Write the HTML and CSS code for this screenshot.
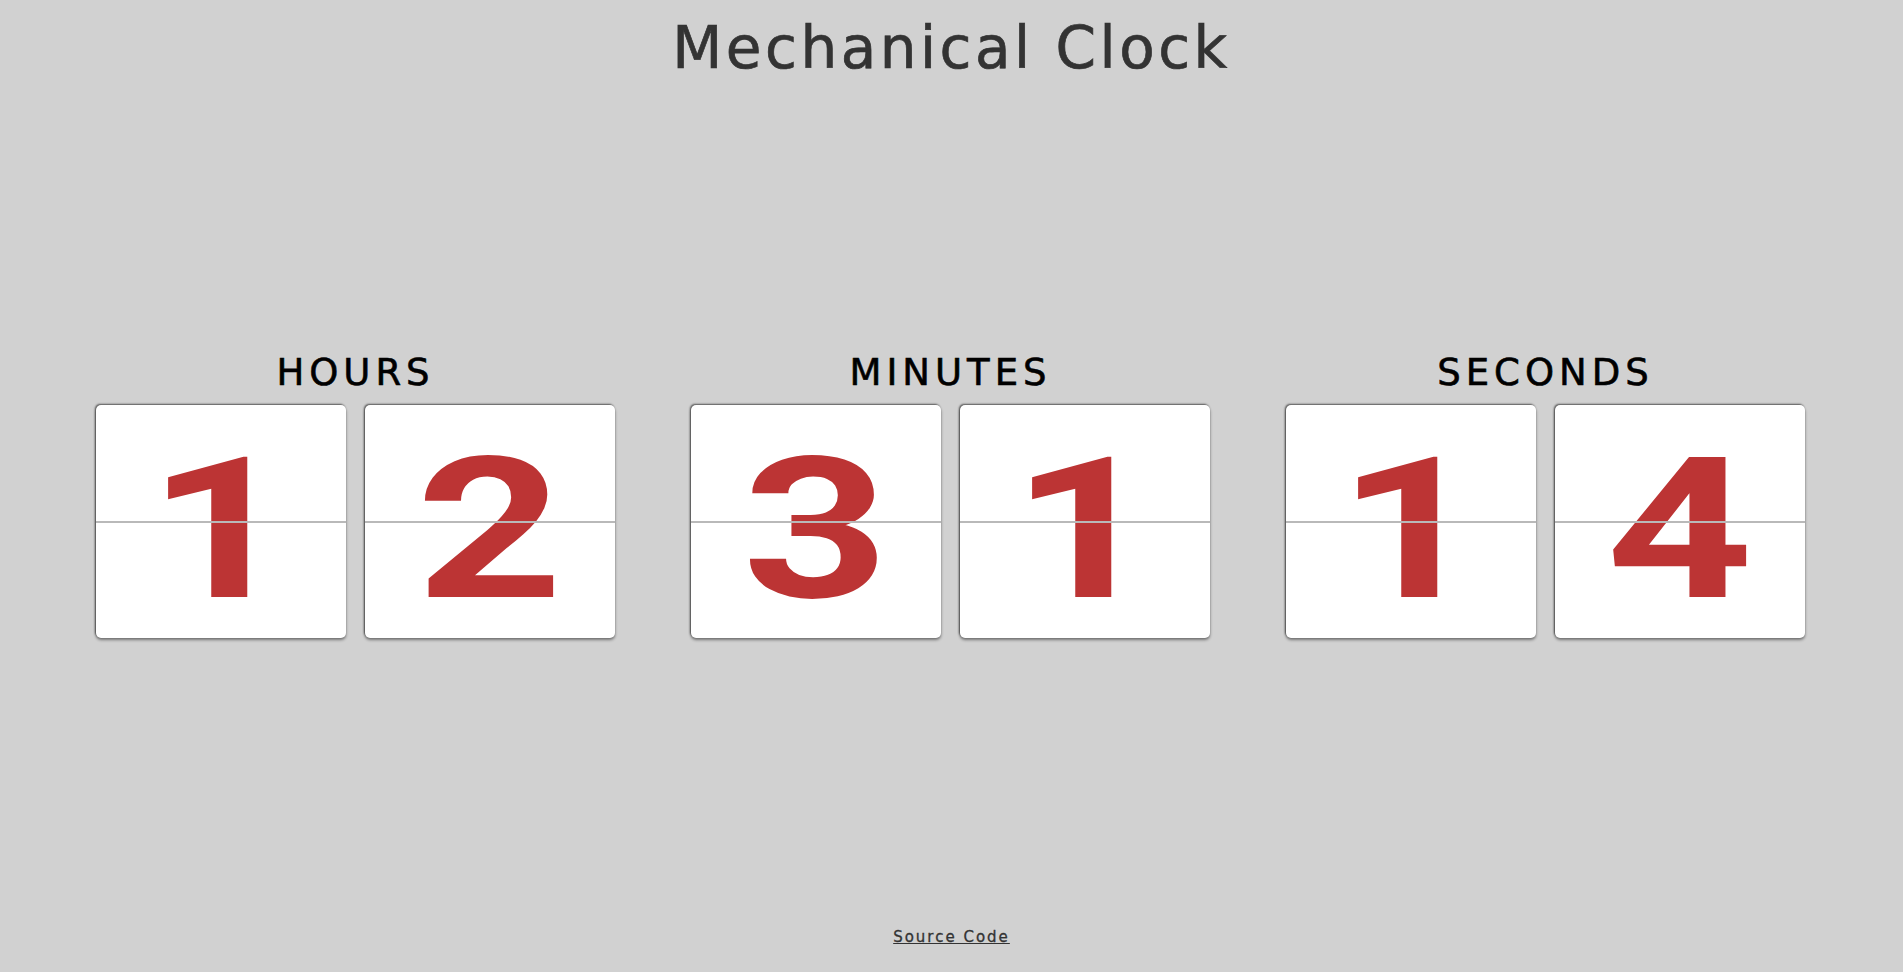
FILE: index.html
```html
<!DOCTYPE html>
<html lang="en">
<head>
<meta charset="utf-8">
<title>Mechanical Clock</title>
<link rel="stylesheet" href="styles.css">
</head>
<body>
<div class="page">
  <h1 class="title">Mechanical Clock</h1>
  <main class="clock">
    <section class="group">
      <div class="label">HOURS</div>
      <div class="cards">
        <div class="card"><span class="digit">1</span></div>
        <div class="card"><span class="digit">2</span></div>
      </div>
    </section>
    <section class="group">
      <div class="label">MINUTES</div>
      <div class="cards">
        <div class="card"><span class="digit">3</span></div>
        <div class="card"><span class="digit">1</span></div>
      </div>
    </section>
    <section class="group">
      <div class="label">SECONDS</div>
      <div class="cards">
        <div class="card"><span class="digit">1</span></div>
        <div class="card"><span class="digit">4</span></div>
      </div>
    </section>
  </main>
  <footer class="footer"><a class="source" href="#">Source Code</a></footer>
</div>
</body>
</html>
```
FILE: styles.css
```css
html, body {
  margin: 0;
  padding: 0;
}
body {
  background: #d1d1d1;
  font-family: "DejaVu Sans", "Liberation Sans", sans-serif;
}
.page {
  display: flex;
  flex-direction: column;
  height: 100vh;
}
.title {
  margin: 19px 0 0;
  font-size: 58px;
  line-height: 58px;
  font-weight: normal;
  color: #333;
  text-align: center;
  letter-spacing: 3.5px;
  -webkit-text-stroke: 0.7px #333;
}
.clock {
  display: flex;
  justify-content: center;
  gap: 76px;
  margin-top: 277px;
  padding-right: 2px;
}
.group {
  display: flex;
  flex-direction: column;
  align-items: center;
  width: 519px;
}
.label {
  font-size: 37px;
  line-height: 37px;
  letter-spacing: 5px;
  color: #000;
  margin-bottom: 14px;
  -webkit-text-stroke: 0.6px #000;
}
.cards {
  display: flex;
  gap: 19px;
}
.card {
  position: relative;
  width: 250px;
  height: 233px;
  box-sizing: border-box;
  padding-top: 15px;
  background: #fff;
  border-radius: 5px;
  display: flex;
  align-items: center;
  justify-content: center;
  box-shadow: -1px -1px 2px rgba(0,0,0,.6), 0 2px 3px rgba(0,0,0,.45);
}
.card::after {
  content: "";
  position: absolute;
  left: 0;
  right: 0;
  top: 116px;
  height: 2px;
  background: #b9b9b9;
}
.digit {
  font-family: Roboto, "Liberation Sans", sans-serif;
  font-weight: bold;
  font-size: 197px;
  line-height: 197px;
  color: #bc3434;
  display: inline-block;
  transform: scaleX(1.3);
}
.footer {
  margin-top: auto;
  padding-bottom: 25px;
  text-align: center;
  font-size: 15px;
  line-height: 20px;
}
.source {
  color: #333;
  letter-spacing: 2px;
  -webkit-text-stroke: 0.3px #333;
}
```
